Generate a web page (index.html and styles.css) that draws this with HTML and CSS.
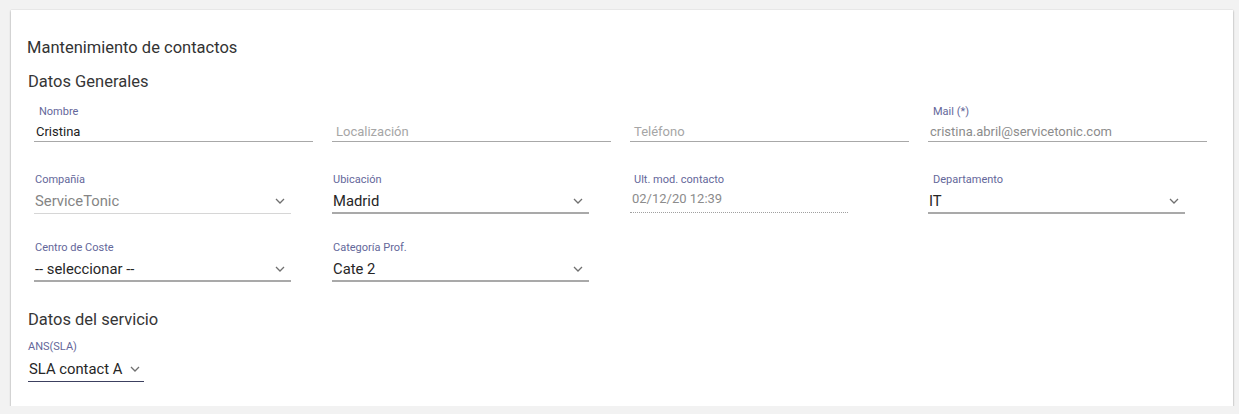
FILE: index.html
```html
<!DOCTYPE html>
<html lang="es">
<head>
<meta charset="utf-8">
<link rel="stylesheet" href="styles.css">
</head>
<body>
<div class="card">
  <div class="title">Mantenimiento de contactos</div>
  <div class="section">Datos Generales</div>
  <div class="grid">
    <div class="field">
      <div class="label lbl-nombre">Nombre</div>
      <div class="input">Cristina</div>
    </div>
    <div class="field">
      <div class="label"></div>
      <div class="input placeholder">Localización</div>
    </div>
    <div class="field">
      <div class="label"></div>
      <div class="input placeholder">Teléfono</div>
    </div>
    <div class="field">
      <div class="label lbl-mail">Mail (*)</div>
      <div class="input readonly">cristina.abril@servicetonic.com</div>
    </div>

    <div class="field">
      <div class="label">Compañía</div>
      <div class="select disabled"><span>ServiceTonic</span><svg class="chev" viewBox="0 0 10 6"><path d="M1 1l4 4 4-4"/></svg></div>
    </div>
    <div class="field">
      <div class="label">Ubicación</div>
      <div class="select"><span>Madrid</span><svg class="chev" viewBox="0 0 10 6"><path d="M1 1l4 4 4-4"/></svg></div>
    </div>
    <div class="field">
      <div class="label lbl-date">Ult. mod. contacto</div>
      <div class="date">02/12/20 12:39</div>
    </div>
    <div class="field">
      <div class="label lbl-mail">Departamento</div>
      <div class="select"><span>IT</span><svg class="chev" viewBox="0 0 10 6"><path d="M1 1l4 4 4-4"/></svg></div>
    </div>

    <div class="field">
      <div class="label">Centro de Coste</div>
      <div class="select"><span>-- seleccionar --</span><svg class="chev" viewBox="0 0 10 6"><path d="M1 1l4 4 4-4"/></svg></div>
    </div>
    <div class="field">
      <div class="label">Categoría Prof.</div>
      <div class="select"><span>Cate 2</span><svg class="chev" viewBox="0 0 10 6"><path d="M1 1l4 4 4-4"/></svg></div>
    </div>
  </div>
  <div class="section section-svc">Datos del servicio</div>
  <div class="sla-field">
    <div class="label">ANS(SLA)</div>
    <div class="sla"><span>SLA contact A</span><svg class="chev" viewBox="0 0 10 6"><path d="M1 1l4 4 4-4"/></svg></div>
  </div>
</div>
</body>
</html>
```

FILE: styles.css
```css
html, body {
  margin: 0;
  padding: 0;
  background: #f2f2f2;
  font-family: Roboto, "Liberation Sans", sans-serif;
}

.card {
  margin: 10px 6px 0 11px;
  height: 396px;
  box-sizing: border-box;
  background: #fff;
  box-shadow: 0 1px 2px rgba(0,0,0,0.35), 0 0 1px rgba(0,0,0,0.12);
  padding: 28px 0 0 16px;
}

.title {
  font-size: 16.5px;
  line-height: 19px;
  color: #333;
  height: 19px;
}

.section {
  font-size: 16.5px;
  line-height: 19px;
  color: #363636;
  margin: 15px 0 0 1px;
}

.grid {
  display: grid;
  grid-template-columns: repeat(4, 279px);
  column-gap: 19px;
  grid-auto-rows: 68px;
  margin: 14px 0 0 7px;
}

.field {
  display: flex;
  flex-direction: column;
  align-items: flex-start;
}

.label {
  font-size: 11px;
  line-height: 14px;
  height: 14px;
  color: #64679a;
  padding-left: 1px;
}

.lbl-nombre { padding-left: 5px; }
.lbl-mail { padding-left: 5px; }
.lbl-date { padding-left: 4px; }

.input {
  box-sizing: border-box;
  width: 279px;
  height: 23px;
  padding: 5px 0 0 2px;
  font-size: 13px;
  line-height: 16px;
  color: #222;
  border-bottom: 1px solid #a8a8a8;
}

.input.placeholder {
  color: #a6a6a6;
  padding-left: 4px;
}

.input.readonly {
  color: #8c8c8c;
  padding-left: 2px;
}

.select {
  box-sizing: border-box;
  width: 257px;
  height: 27px;
  display: flex;
  align-items: center;
  justify-content: space-between;
  padding: 2px 6px 0 1px;
  font-size: 14.8px;
  color: #262626;
  border-bottom: 2px solid #a9a9a9;
}

.select.disabled {
  color: #858585;
  border-bottom: 1px solid #d6d6d6;
}

.chev {
  width: 10px;
  height: 6px;
  fill: none;
  stroke: #707070;
  stroke-width: 1.3;
}

.date {
  box-sizing: border-box;
  width: 218px;
  height: 24px;
  margin-top: 2px;
  padding: 2px 0 0 2px;
  font-size: 13px;
  line-height: 16px;
  color: #8c8c8c;
  border-bottom: 1px dotted #a0a0a0;
}

.section-svc {
  margin-top: 1px;
}

.sla-field {
  display: flex;
  flex-direction: column;
  align-items: flex-start;
  margin: 11px 0 0 1px;
}

.sla-field .label {
  padding-left: 0;
}

.sla {
  box-sizing: border-box;
  height: 28px;
  display: flex;
  align-items: center;
  gap: 8px;
  padding: 2px 4px 0 1px;
  font-size: 14.8px;
  color: #262626;
  border-bottom: 1px solid #3c4060;
}
```
